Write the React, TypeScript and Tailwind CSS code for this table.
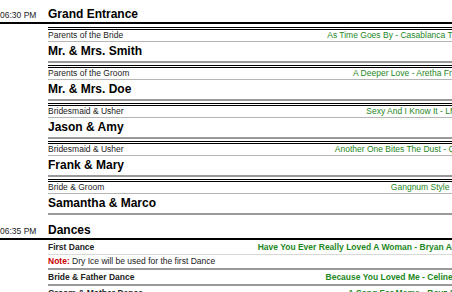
const entrance = [
  { label: "Parents of the Bride", name: "Mr. & Mrs. Smith", song: "As Time Goes By - Casablanca Theme" },
  { label: "Parents of the Groom", name: "Mr. & Mrs. Doe", song: "A Deeper Love - Aretha Franklin" },
  { label: "Bridesmaid & Usher", name: "Jason & Amy", song: "Sexy And I Know It - LMFAO" },
  { label: "Bridesmaid & Usher", name: "Frank & Mary", song: "Another One Bites The Dust - Queen" },
  { label: "Bride & Groom", name: "Samantha & Marco", song: "Gangnum Style - PSY" },
];

const dances = [
  { title: "First Dance", song: "Have You Ever Really Loved A Woman - Bryan Adams", note: "Dry Ice will be used for the first Dance" },
  { title: "Bride & Father Dance", song: "Because You Loved Me - Celine Dion", note: "" },
  { title: "Groom & Mother Dance", song: "A Song For Mama - Boyz II Men", note: "" },
];

const SectionHead = ({ time, title, top }: { time: string; title: string; top: string }) => {
  return (
    <div className={`flex border-b-2 border-black ${top}`}>
      <div className="w-[48px] shrink-0 text-[8.5px] leading-[14px] text-[#222] pt-[1px]">{time}</div>
      <div className="text-[12px] leading-[14px] font-bold text-black">{title}</div>
    </div>
  );
};

const App = () => {
  return (
    <div className="w-[452px] h-[292px] overflow-hidden bg-white" style={{ fontFamily: '"Liberation Sans", Arial, sans-serif' }}>
      <div className="w-[474px]">
        <SectionHead time="06:30 PM" title="Grand Entrance" top="pt-[7px]" />
        <div className="pl-[48px] pt-[3px]">
          {entrance.map((item, index) => (
            <div key={index} className="border-t-[3px] border-double border-black mb-[2px]">
              <div className="flex justify-between h-[12px] leading-[11px] text-[8.5px] border-b border-[#b5b5b5]">
                <span className="text-[#222]">{item.label}</span>
                <span className="text-[#1e881e] whitespace-nowrap">{item.song}</span>
              </div>
              <div className="h-[21px] leading-[19px] text-[12px] font-bold text-black border-b-2 border-[#999]">
                {item.name}
              </div>
            </div>
          ))}
        </div>
        <SectionHead time="06:35 PM" title="Dances" top="pt-[6px]" />
        <div className="pl-[48px]">
          {dances.map((d, index) => (
            <div key={index} className="border-b-2 border-[#999]">
              <div className="flex justify-between h-[14px] leading-[14px] text-[8.5px] font-bold">
                <span className="text-[#222]">{d.title}</span>
                <span className="text-[#1e881e] whitespace-nowrap">{d.song}</span>
              </div>
              {d.note && (
                <div className="border-t border-[#d8d8d8] h-[14px] leading-[13px] text-[8.5px] text-[#222]">
                  <span className="font-bold text-[#cc0000]">Note:</span> {d.note}
                </div>
              )}
            </div>
          ))}
        </div>
      </div>
    </div>
  );
};

export default App;
